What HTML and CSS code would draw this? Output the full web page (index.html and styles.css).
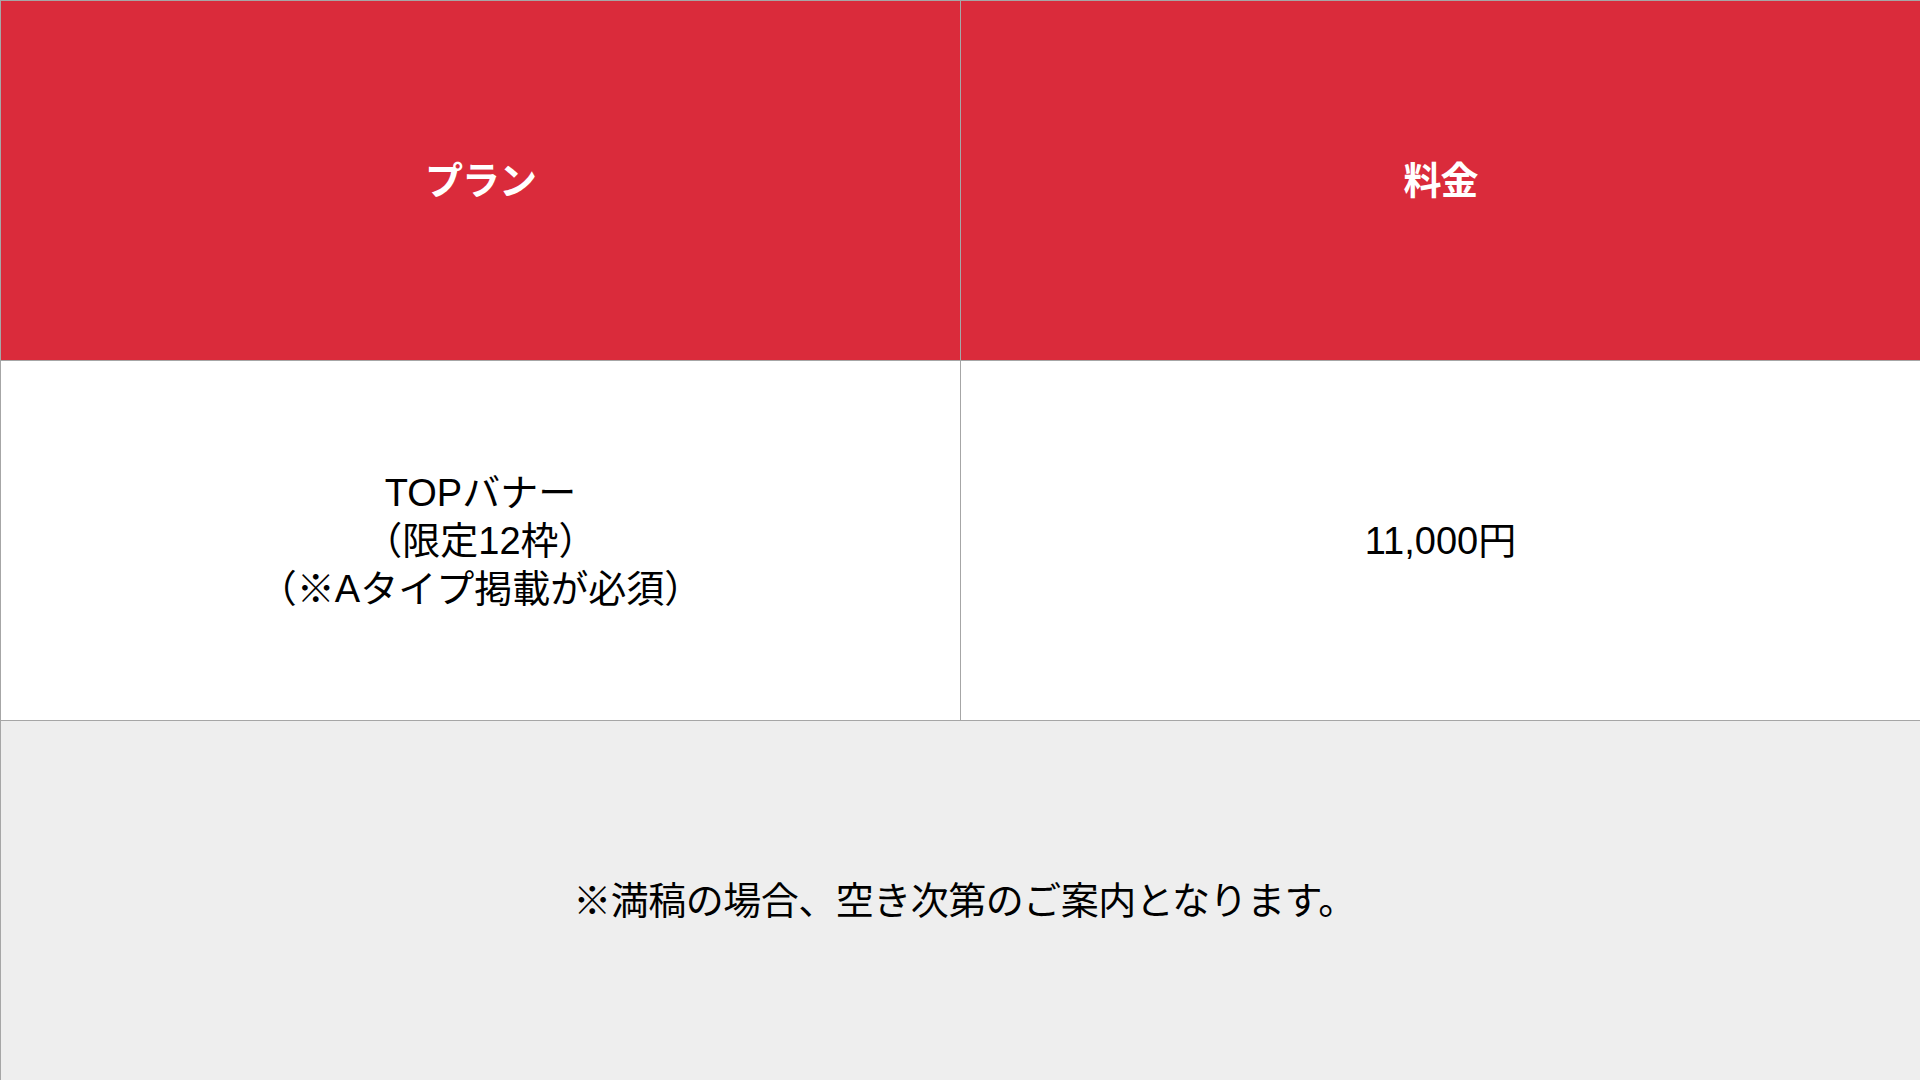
FILE: index.html
```html
<!DOCTYPE html>
<html lang="ja">
<head>
<meta charset="utf-8">
<title>料金表</title>
<link rel="stylesheet" href="styles.css">
</head>
<body>
<div class="table">
  <div class="cell head">プラン</div>
  <div class="cell head">料金</div>
  <div class="cell body">TOPバナー<br>（限定12枠）<br>（※Aタイプ掲載が必須）</div>
  <div class="cell body">11,000円</div>
  <div class="cell note">※満稿の場合、空き次第のご案内となります。</div>
</div>
</body>
</html>
```
FILE: styles.css
```css
html, body {
  margin: 0;
  padding: 0;
  background: #ffffff;
}
.table {
  width: 1920px;
  height: 1080px;
  display: grid;
  grid-template-columns: 960px 960px;
  grid-template-rows: 360px 360px 360px;
  font-family: "Liberation Sans", "Noto Sans CJK JP", sans-serif;
  font-size: 38px;
  line-height: 48px;
  color: #000000;
}
.cell {
  box-sizing: border-box;
  border-left: 1px solid #a6a6a6;
  border-top: 1px solid #a6a6a6;
  display: flex;
  align-items: center;
  justify-content: center;
  text-align: center;
}
.head {
  background: #da2b3b;
  color: #ffffff;
  font-weight: bold;
  letter-spacing: -1px;
}
.body {
  background: #ffffff;
}
.note {
  grid-column: 1 / 3;
  background: #eeeeee;
  letter-spacing: -0.5px;
  padding-left: 8px;
}
```
